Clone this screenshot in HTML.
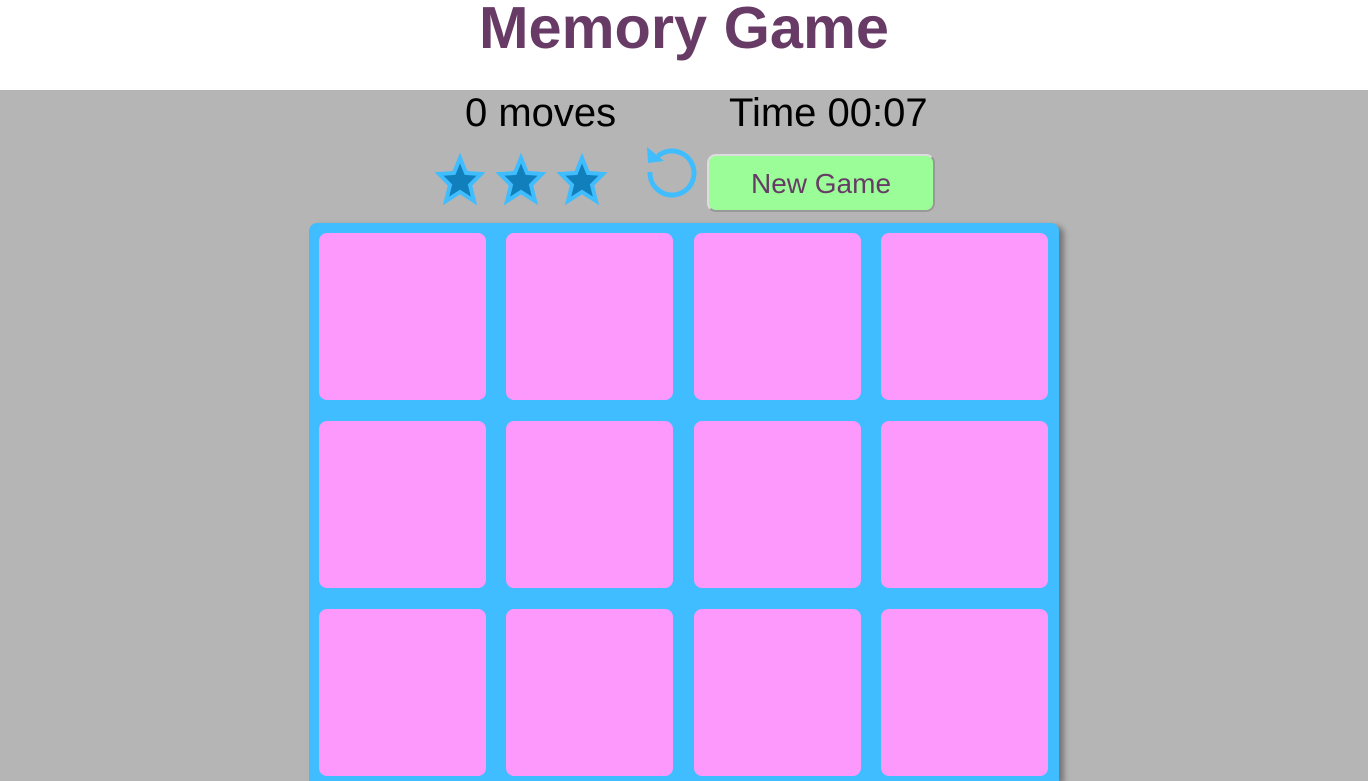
<!DOCTYPE html>
<html><head><style>
html,body{margin:0;width:1368px;height:781px;overflow:hidden}
body{background:#b5b5b5;font-family:"Liberation Sans",Arial,sans-serif;position:relative}
.hdr{position:absolute;left:0;top:0;width:1368px;height:90px;background:#fff}
h1{position:absolute;left:0;width:1368px;top:-7px;margin:0;text-align:center;font-size:59.5px;font-weight:bold;color:#673b66}
.t{position:absolute;top:90px;font-size:40px;color:#000;line-height:46px}
.board{position:absolute;left:309px;top:223px;width:750px;height:558px;background:#3fbdfe;border-radius:8px 8px 0 0;box-shadow:5px 3px 6px rgba(0,0,0,.35)}
.c{position:absolute;width:167px;height:167px;background:#fd99fd;border-radius:8px}
.btn{position:absolute;left:707px;top:154px;width:228px;height:58px;background:#9afd97;border-radius:9px;border:2px solid #ddd;border-right-color:#999;border-bottom-color:#999;box-sizing:border-box;color:#673b66;font-size:28px;text-align:center;line-height:56px}
</style></head><body>
<div class="hdr"><h1>Memory Game</h1></div>
<div class="t" style="left:465px">0 moves</div>
<div class="t" style="left:729px">Time 00:07</div>
<svg style="position:absolute;left:0;top:0" width="1368" height="230">
<g fill="#107fbc" stroke="#3fbdfe" stroke-width="4" stroke-linejoin="miter">
<polygon transform="translate(460,181)" points="0,-23 6,-8 21,-7 10,4 14,20 0,11 -14,20 -10,4 -21,-7 -6,-8"/>
<polygon transform="translate(521,181)" points="0,-23 6,-8 21,-7 10,4 14,20 0,11 -14,20 -10,4 -21,-7 -6,-8"/>
<polygon transform="translate(582,181)" points="0,-23 6,-8 21,-7 10,4 14,20 0,11 -14,20 -10,4 -21,-7 -6,-8"/>
</g>
<path d="M658,156 A22,22 0 1 1 650,172" fill="none" stroke="#3fbdfe" stroke-width="5"/>
<polygon points="647,147 648,163 664,161" fill="#3fbdfe"/>
</svg>
<div class="btn">New Game</div>
<div class="board">
<div class="c" style="left:10px;top:10px"></div><div class="c" style="left:197px;top:10px"></div><div class="c" style="left:385px;top:10px"></div><div class="c" style="left:572px;top:10px"></div>
<div class="c" style="left:10px;top:198px"></div><div class="c" style="left:197px;top:198px"></div><div class="c" style="left:385px;top:198px"></div><div class="c" style="left:572px;top:198px"></div>
<div class="c" style="left:10px;top:386px"></div><div class="c" style="left:197px;top:386px"></div><div class="c" style="left:385px;top:386px"></div><div class="c" style="left:572px;top:386px"></div>
</div>
</body></html>
